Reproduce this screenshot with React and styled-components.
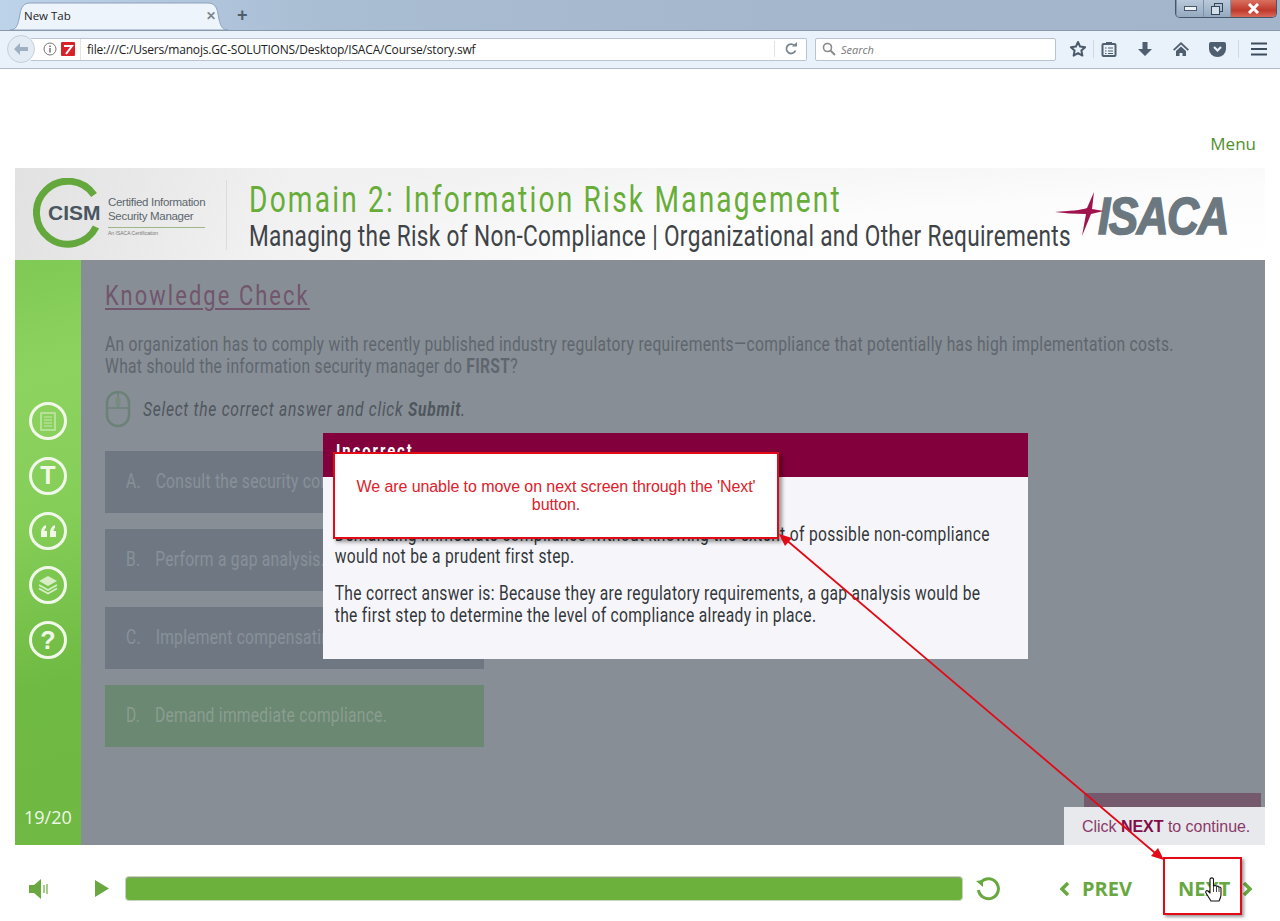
import React from 'react';
import styled, { createGlobalStyle, css } from 'styled-components';

const Global = createGlobalStyle`
  html, body { margin: 0; padding: 0; height: 921px; overflow: hidden; background: #fff; }
  * { box-sizing: border-box; }
`;
const narrow = `"Roboto", "Liberation Sans", sans-serif`;
const ui = `"Open Sans", "Noto Sans", sans-serif`;
const condensed = css`transform: scaleX(0.78); transform-origin: left center;`;

const Page = styled.div`position: relative; width: 1280px; height: 921px; background: #fff; overflow: hidden; display: flex; flex-direction: column;`;

/* Browser chrome */
const TabBar = styled.div`
  height: 30px; flex: none; display: flex; align-items: flex-end; position: relative; padding-left: 10px;
  background: linear-gradient(90deg, #bcd3ea 0, #a9bdd3 25%, #a5b7cc 60%, #a3b5cb 100%);
`;
const Tab = styled.div`
  width: 218px; height: 28px; flex: none; display: flex; align-items: center; justify-content: space-between; padding: 0 12px 1px 14px;
  font: 11.5px ${ui}; color: #1d1d1d; position: relative;
`;
const TabShape = styled.svg`position: absolute; left: 0; top: 0;`;
const TabLabel = styled.span`position: relative;`;
const TabClose = styled.span`position: relative; font: bold 12px "Liberation Sans", sans-serif; color: #7a8590;`;
const NewTab = styled.span`margin-left: 9px; margin-bottom: 6px; font: bold 18px/18px "Liberation Sans", sans-serif; color: #4f5d6d;`;
const WindowButtons = styled.div`
  position: absolute; top: 0; right: 3px; width: 102px; height: 18px; display: flex;
  border: 1px solid #44566a; border-top: none; border-radius: 0 0 5px 5px; overflow: hidden;
`;
const WinBtn = styled.div`
  width: ${p => p.$w}px; display: flex; align-items: center; justify-content: center;
  background: ${p => p.$close ? 'linear-gradient(#d9705f, #c0392b 60%, #d8695a)' : 'linear-gradient(#b9c9da, #94a9c0)'};
  border-left: 1px solid #7e91a6;
`;
const NavBar = styled.div`
  height: 39px; flex: none; display: flex; align-items: center; padding: 0 5px 1px 7px;
  background: #e9f1fa; border-top: 1px solid #8899ab; border-bottom: 1px solid #b0bcc9;
`;
const BackBtn = styled.div`
  width: 28px; height: 28px; border-radius: 50%; flex: none; background: #e3ebf4; border: 1px solid #c5d0dc;
  display: flex; align-items: center; justify-content: center; margin-right: -4px; position: relative; z-index: 1;
`;
const UrlBar = styled.div`
  width: 776px; height: 23px; flex: none; background: #fff; border: 1px solid #b9c4d0; border-left: none; border-radius: 0 2px 2px 0;
  display: flex; align-items: center; padding-left: 12px; font: 12px ${ui}; color: #222;
`;
const UrlIcons = styled.div`display: flex; align-items: center; gap: 4px; width: 38px; flex: none; height: 100%; border-right: 1px solid #e4e4e4; margin-right: 6px;`;
const UrlText = styled.span`flex: 1; letter-spacing: -0.19px; white-space: nowrap;`;
const Reload = styled.div`width: 32px; height: 16px; border-left: 1px solid #e2e2e2; display: flex; align-items: center; justify-content: center;`;
const SearchBox = styled.div`
  width: 241px; height: 23px; flex: none; margin-left: 8px; background: #fff; border: 1px solid #b9c4d0; border-radius: 2px;
  display: flex; align-items: center; gap: 5px; padding-left: 6px; font: italic 11px ${ui}; color: #777;
`;
const ToolIcons = styled.div`display: flex; align-items: center; margin-left: 10px; height: 24px;`;
const ToolIcon = styled.div`width: ${p => p.$w || 36}px; margin-right: ${p => p.$mr || 0}px; display: flex; justify-content: center; align-items: center; height: 24px;`;
const ToolSep = styled.div`width: 1px; height: 18px; margin: 0 3px; background: #cfd9e4; flex: none;`;

/* Course */
const MenuRow = styled.div`
  height: 99px; flex: none; display: flex; align-items: flex-end; justify-content: flex-end; padding: 0 24px 13px 0;
  font: 17px ${ui}; color: #4f8f2f;
`;
const Course = styled.div`width: 1250px; margin-left: 15px; flex: none; display: flex; flex-direction: column;`;
const Header = styled.div`
  height: 92px; display: flex; align-items: stretch; position: relative;
  background:
    linear-gradient(100deg, #e2e2e2 0, rgba(240,240,240,.8) 22%, rgba(255,255,255,0) 50%),
    linear-gradient(176deg, #efefef, #fcfcfc 60%, #ffffff);
`;
const LogoCism = styled.div`width: 211px; flex: none; display: flex; align-items: center; padding: 0 0 2px 18px; gap: 5px;`;
const CismRing = styled.div`position: relative; width: 70px; height: 70px; flex: none;`;
const CismWord = styled.span`
  position: absolute; left: 15px; top: 26px; font: bold 21px/18px "Liberation Sans", sans-serif; color: #4a5560;
`;
const CismText = styled.div`display: flex; flex-direction: column; font: 11.5px/14px "Liberation Sans", sans-serif; letter-spacing: -0.3px; color: #5c666e; margin-top: 6px; white-space: nowrap;`;
const CismSmall = styled.span`font-size: 5px; line-height: 8px; letter-spacing: 0; margin-top: 4px; border-top: 1px solid #9fb68a; color: #777; padding-top: 1px;`;
const HeaderDivider = styled.div`width: 1px; margin: 12px 0 10px; background: #dcdcdc; flex: none;`;
const Titles = styled.div`padding: 11px 0 0 22px; display: flex; flex-direction: column; white-space: nowrap;`;
const Title = styled.div`font: 36px/42px ${narrow}; color: #67ad37; letter-spacing: 2.83px; ${condensed}`;
const Subtitle = styled.div`font: 29px/34px ${narrow}; color: #3e4347; letter-spacing: 0.43px; margin-top: -2px; ${condensed}`;
const Isaca = styled.div`position: absolute; right: 36px; top: 15px; width: 175px; height: 60px;`;
const IsacaWord = styled.span`
  position: absolute; left: 44px; top: 8px; font: italic bold 52px/50px "Liberation Sans", sans-serif; letter-spacing: -1.8px; color: #6b7880;
  -webkit-text-stroke: 1.6px #6b7880; transform: scaleX(0.85); transform-origin: left center;
`;
const Stage = styled.div`height: 585px; display: grid; grid-template-columns: 66px minmax(0, 1fr); position: relative;`;
const Sidebar = styled.div`
  position: relative; display: flex; flex-direction: column; align-items: center; padding-top: 142px; gap: 16.75px;
  background: linear-gradient(165deg, #80c955 0, #8dd35f 20%, #84ce58 45%, #6fba42 72%, #6fb944 100%);
`;
const SideIcon = styled.div`
  width: 38px; height: 38px; border-radius: 50%; border: 3px solid #f1f8ea; display: flex; align-items: center; justify-content: center;
  color: #f1f8ea; font: bold 25px "Liberation Sans", sans-serif;
`;
const PageCount = styled.div`position: absolute; left: 9px; bottom: 16px; font: 18px/24px ${ui}; color: #eef7e6;`;
const Main = styled.div`background: #878e96; padding: 21px 0 0 24px; position: relative; min-width: 0;`;
const KcTitle = styled.div`font: 28px/30px ${narrow}; color: #71566c; text-decoration: underline; text-underline-offset: 3px; letter-spacing: 2.7px; white-space: nowrap; ${condensed}`;
const Question = styled.div`margin-top: 22px; font: 20px/22px ${narrow}; color: #5f666d; letter-spacing: 0.4px; white-space: nowrap; ${condensed}`;
const Instruction = styled.div`margin-top: 13px; height: 38px; display: flex; align-items: center; gap: 12px; font: italic 20px/24px ${narrow}; color: #4f565d;`;
const InstructionText = styled.span`letter-spacing: 0.95px; white-space: nowrap; ${condensed}`;
const Options = styled.div`margin-top: 23px; width: 379px; display: flex; flex-direction: column; gap: 16px;`;
const Option = styled.div`
  height: 62px; display: flex; align-items: center; padding: 0 0 2px 21px; white-space: nowrap;
  background: ${p => p.$correct ? '#6b8873' : '#6f7882'}; color: ${p => p.$correct ? '#8a9d90' : '#88909a'};
  font: 20px/24px ${narrow}; letter-spacing: 0.35px;
`;
const OptionInner = styled.div`display: flex; gap: 19px; ${condensed}`;
const SubmitBar = styled.div`position: absolute; right: 4px; bottom: 0; width: 177px; height: 52px; background: #755a6d;`;
const Continue = styled.div`
  position: absolute; right: 0; bottom: 0; width: 201px; height: 38px; background: #e7e9ed; padding: 10px 0 0 18px;
  font: 16px/20px "Liberation Sans", sans-serif; color: #8b3a68; letter-spacing: -0.03px; white-space: nowrap;
`;
const ContinueStrong = styled.b`color: #820c46;`;
const Modal = styled.div`position: absolute; left: 308px; top: 173px; width: 705px; height: 226px; background: #f6f6fa; display: flex; flex-direction: column;`;
const ModalHead = styled.div`height: 44px; background: #82003c; color: #fff; padding-left: 13px;`;
const ModalTitle = styled.div`font: bold 19px/36px ${narrow}; letter-spacing: 2.5px; ${condensed}`;
const ModalBody = styled.div`
  padding: 46px 0 0 15px; width: 870px; font: 20px/22px ${narrow}; color: #33363a; letter-spacing: 0.42px;
  display: flex; flex-direction: column; gap: 15px; ${condensed}
`;
const Para = styled.p`margin: 0;`;

/* Player controls */
const Controls = styled.div`flex: 1; display: flex; align-items: center; padding: 11px 0 0 29px; position: relative;`;
const Progress = styled.div`width: 838px; height: 25px; margin-left: 16px; border-radius: 4px; background: #6cb13b; border: 1px solid #c4d6b6; box-shadow: inset 0 1px 1px #8d9c80;`;
const NavText = styled.div`font: bold 20px/26px ${ui}; color: #69a841; display: flex; align-items: center; gap: 11px; margin-left: ${p => p.$ml}px;`;
const PlayIcon = styled.svg`margin-left: 46px;`;
const ReplayIcon = styled.svg`margin-left: 12px;`;

/* Annotations lying over the capture */
const Callout = styled.div`
  position: absolute; left: 333px; top: 452px; width: 446px; height: 87px; background: #fff; border: 2px solid #e20a16;
  box-shadow: 3px 3px 4px rgba(0,0,0,.4); display: flex; align-items: center; justify-content: center; text-align: center;
  padding: 0 18px; font: 16px/18px "Liberation Sans", sans-serif; letter-spacing: -0.08px; color: #e0202a;
`;
const NextFrame = styled.div`
  position: absolute; left: 1163px; top: 857px; width: 79px; height: 58px; border: 2px solid #e20a16; box-shadow: 2px 2px 3px rgba(0,0,0,.4);
`;
const Overlay = styled.svg`position: absolute; left: 0; top: 0; pointer-events: none;`;
const Cursor = styled.svg`position: absolute; left: 1204px; top: 877px;`;

const Star = () => (
  <svg width="18" height="18" viewBox="0 0 18 18"><path d="M9 2l2.100 4.600 5 .6-3.700 3.400 1 5L9 13.100l-4.400 2.500 1-5L1.900 7.200l5-.6z" fill="none" stroke="#4a5a6a" strokeWidth="2" strokeLinejoin="round"/></svg>
);
const c = '#4f5f70';

export default function App() {
  return (
    <Page>
      <Global />
      <TabBar>
        <Tab>
          <TabShape width="218" height="28" viewBox="0 0 218 28">
            <path d="M0 28C6 28 8 24 10 12 11 5 14 1 20 1H198C204 1 207 5 208 12 210 24 212 28 218 28z" fill="#edf4fb" stroke="#8fa3ba"/>
          </TabShape>
          <TabLabel>New Tab</TabLabel><TabClose>✕</TabClose>
        </Tab>
        <NewTab>+</NewTab>
        <WindowButtons>
          <WinBtn $w={28}><svg width="13" height="6"><rect x=".5" y=".5" width="12" height="4" fill="#eef3f8" stroke="#45586c"/></svg></WinBtn>
          <WinBtn $w={27}><svg width="12" height="12"><rect x="3.500" y=".5" width="8" height="8" fill="none" stroke="#33465a"/><rect x=".5" y="3.500" width="8" height="8" fill="#d5dfe9" stroke="#33465a"/></svg></WinBtn>
          <WinBtn $w={47} $close><svg width="13" height="11"><path d="M2 1l9 9M11 1l-9 9" stroke="#fff" strokeWidth="3"/></svg></WinBtn>
        </WindowButtons>
      </TabBar>
      <NavBar>
        <BackBtn><svg width="16" height="14" viewBox="0 0 16 14"><path d="M7 1L1 7l6 6V9h8V5H7z" fill="#9fb0c2"/></svg></BackBtn>
        <UrlBar>
          <UrlIcons>
            <svg width="14" height="14" viewBox="0 0 14 14"><circle cx="7" cy="7" r="6" fill="#fff" stroke="#777"/><path d="M7 6v4.500M7 3.500v1.500" stroke="#666" strokeWidth="1.400"/></svg>
            <svg width="14" height="14" viewBox="0 0 14 14"><rect width="14" height="14" fill="#d8222a" rx="1"/><path d="M3 4h8L5 12" fill="none" stroke="#fff" strokeWidth="2"/></svg>
          </UrlIcons>
          <UrlText>file:///C:/Users/manojs.GC-SOLUTIONS/Desktop/ISACA/Course/story.swf</UrlText>
          <Reload><svg width="14" height="14" viewBox="0 0 14 14"><path d="M11.500 8.500A4.700 4.700 0 1 1 10.500 3.500" fill="none" stroke="#7a8792" strokeWidth="1.800"/><path d="M8 4.500h5V0z" fill="#7a8792"/></svg></Reload>
        </UrlBar>
        <SearchBox>
          <svg width="14" height="14" viewBox="0 0 14 14"><circle cx="5.500" cy="5.500" r="4" fill="none" stroke="#8a8a8a" strokeWidth="1.600"/><path d="M8.500 8.500l4.500 4.500" stroke="#8a8a8a" strokeWidth="2"/></svg>
          <span>Search</span>
        </SearchBox>
        <ToolIcons>
          <ToolIcon $w={24}><Star /></ToolIcon>
          <ToolSep />
          <ToolIcon $w={24} $mr={6}><svg width="16" height="16" viewBox="0 0 16 16"><rect x="1.500" y="3" width="13" height="12" rx="1" fill="none" stroke={c} strokeWidth="2"/><rect x="5" y="1" width="6" height="3" fill={c}/><path d="M4 7h1.500M7 7h5M4 10h1.500M7 10h5M4 12.500h1.500M7 12.500h5" stroke={c}/></svg></ToolIcon>
          <ToolIcon><svg width="16" height="16" viewBox="0 0 16 16"><path d="M5.500 1h5v7H15l-7 7-7-7h4.500z" fill={c}/></svg></ToolIcon>
          <ToolIcon><svg width="16" height="16" viewBox="0 0 16 16"><path d="M8 1L0 8.500l1.300 1.200L8 3.500l6.700 6.200L16 8.500z" fill={c}/><path d="M3 10l5-4.500 5 4.500v5H9.500v-3h-3v3H3z" fill={c}/></svg></ToolIcon>
          <ToolIcon><svg width="17" height="15" viewBox="0 0 17 15"><path d="M2 0h13a2 2 0 0 1 2 2v5a8.500 8 0 0 1-17 0V2a2 2 0 0 1 2-2z" fill={c}/><path d="M5 5l3.500 3.500L12 5" fill="none" stroke="#e9f1fa" strokeWidth="2.200"/></svg></ToolIcon>
          <ToolSep />
          <ToolIcon $w={34}><svg width="16" height="14" viewBox="0 0 16 14"><path d="M0 1.500h16M0 7h16M0 12.500h16" stroke="#3c4c5c" strokeWidth="2.200"/></svg></ToolIcon>
        </ToolIcons>
      </NavBar>

      <MenuRow>Menu</MenuRow>
      <Course>
        <Header>
          <LogoCism>
            <CismRing>
              <svg width="70" height="70" viewBox="0 0 70 70"><path d="M61 17A31.500 31.500 0 1 0 63 49" fill="none" stroke="#64a83d" strokeWidth="7"/></svg>
              <CismWord>CISM</CismWord>
            </CismRing>
            <CismText>
              <span>Certified Information</span>
              <span>Security Manager</span>
              <CismSmall>An ISACA Certification</CismSmall>
            </CismText>
          </LogoCism>
          <HeaderDivider />
          <Titles>
            <Title>Domain 2: Information Risk Management</Title>
            <Subtitle>Managing the Risk of Non-Compliance | Organizational and Other Requirements</Subtitle>
          </Titles>
          <Isaca>
            <IsacaWord>ISACA</IsacaWord>
            <Overlay width="60" height="60" viewBox="0 0 60 60"><path d="M1 29C15 28 28 27 33 25L40 9 38 26 50 28 37 31 28 53 32 31C20 31 10 30 1 29z" fill="#a0134e"/></Overlay>
          </Isaca>
        </Header>
        <Stage>
          <Sidebar>
            <SideIcon><svg width="18" height="20" viewBox="0 0 18 20"><rect x="2" y="2" width="14" height="17" fill="none" stroke="#c6e6ae" strokeWidth="1.500"/><path d="M5 6h8M5 9h8M5 12h8M5 15h8" stroke="#c6e6ae"/></svg></SideIcon>
            <SideIcon>T</SideIcon>
            <SideIcon><svg width="20" height="14" viewBox="0 0 20 14"><path d="M3 13V8c0-3 2-6 5-7v3c-1 .5-1.500 2-1.500 3H9v6zM12 13V8c0-3 2-6 5-7v3c-1 .5-1.500 2-1.500 3H18v6z" fill="#f1f8ea"/></svg></SideIcon>
            <SideIcon><svg width="22" height="22" viewBox="0 0 22 22"><path d="M11 2l9 5-9 5-9-5z" fill="#d7eec6"/><path d="M2 11l9 5 9-5M2 14.500l9 5 9-5" fill="none" stroke="#d7eec6" strokeWidth="1.600"/></svg></SideIcon>
            <SideIcon>?</SideIcon>
            <PageCount>19/20</PageCount>
          </Sidebar>
          <Main>
            <KcTitle>Knowledge Check</KcTitle>
            <Question>
              An organization has to comply with recently published industry regulatory requirements—compliance that potentially has high implementation costs.
              <br />What should the information security manager do <b>FIRST</b>?
            </Question>
            <Instruction>
              <svg width="26" height="38" viewBox="0 0 26 38"><rect x="2" y="2" width="22" height="34" rx="11" fill="none" stroke="#6c8278" strokeWidth="2.500"/><path d="M2 18h22M13 2v16" stroke="#6c8278" strokeWidth="1.500"/><rect x="10.500" y="7" width="5" height="9" rx="2.500" fill="#788b80"/></svg>
              <InstructionText>Select the correct answer and click <b>Submit</b>.</InstructionText>
            </Instruction>
            <Options>
              <Option><OptionInner><span>A.</span><span>Consult the security committee.</span></OptionInner></Option>
              <Option><OptionInner><span>B.</span><span>Perform a gap analysis.</span></OptionInner></Option>
              <Option><OptionInner><span>C.</span><span>Implement compensating controls.</span></OptionInner></Option>
              <Option $correct><OptionInner><span>D.</span><span>Demand immediate compliance.</span></OptionInner></Option>
            </Options>
            <SubmitBar />
            <Continue>Click <ContinueStrong>NEXT</ContinueStrong> to continue.</Continue>
          </Main>
          <Modal>
            <ModalHead><ModalTitle>Incorrect</ModalTitle></ModalHead>
            <ModalBody>
              <Para>Demanding immediate compliance without knowing the extent of possible non-compliance would not be a prudent first step.</Para>
              <Para>The correct answer is: Because they are regulatory requirements, a gap analysis would be the first step to determine the level of compliance already in place.</Para>
            </ModalBody>
          </Modal>
        </Stage>
      </Course>
      <Controls>
        <svg width="20" height="20" viewBox="0 0 20 20"><path d="M0 6h5l7-6v20l-7-6H0z" fill="#69a841"/><path d="M15 6v8M18 5v10" stroke="#69a841" strokeWidth="1.200"/></svg>
        <PlayIcon width="14" height="17" viewBox="0 0 14 17"><path d="M0 0l14 8.500-14 8.500z" fill="#69a841"/></PlayIcon>
        <Progress />
        <ReplayIcon width="26" height="26" viewBox="0 0 26 26"><path d="M6 6A10 10 0 1 1 3.500 14" fill="none" stroke="#69a841" strokeWidth="3"/><path d="M1 5l7-1 0 7z" fill="#69a841"/></ReplayIcon>
        <NavText $ml={59}><svg width="11" height="14" viewBox="0 0 11 14"><path d="M8 1L2 7l6 6" fill="none" stroke="#69a841" strokeWidth="3.500"/></svg>PREV</NavText>
        <NavText $ml={46}>NEXT<svg width="11" height="14" viewBox="0 0 11 14"><path d="M3 1l6 6-6 6" fill="none" stroke="#69a841" strokeWidth="3.500"/></svg></NavText>
      </Controls>

      <Callout>We are unable to move on next screen through the 'Next' button.</Callout>
      <NextFrame />
      <Overlay width="1280" height="921" viewBox="0 0 1280 921">
        <path d="M784 538L1161 858" stroke="#e20a16" strokeWidth="1.800"/>
        <path d="M779 534l13 4-7 8zM1164 860l-13-4 7-8z" fill="#e20a16"/>
      </Overlay>
      <Cursor width="20" height="26" viewBox="0 0 20 26">
        <path d="M6 2c1-1.500 3-1.500 3.500 0V9l1-.5c1 0 1.500 0 2 .8 1-.3 1.800 0 2.200 .8 1-.3 2 .2 2.300 1.200V18c0 2-1 4-2 6H7L2 16c-1-1.500 .5-3 2-2l2 2z" fill="#fff" stroke="#111" strokeWidth="1.100" strokeLinejoin="round"/>
        <path d="M9.500 9v6M12.500 9.500v5.500M15 10.500v4.500" stroke="#111" strokeWidth=".8"/>
      </Cursor>
    </Page>
  );
}
